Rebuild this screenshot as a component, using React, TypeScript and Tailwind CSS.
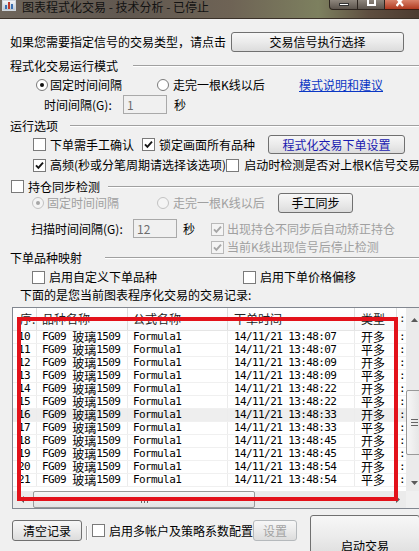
import React from 'react';

const ui = "font-['Noto_Sans_CJK_SC','Noto_Sans',sans-serif]";
const mono = "font-['DejaVu_Sans_Mono','Noto_Sans_CJK_SC',monospace] text-[11px] tracking-[-0.6px]";

type Flag = { checked?: boolean; disabled?: boolean };

function Check({ checked = false, disabled = false }: Flag) {
  return (
    <span
      className={`flex h-[13px] w-[13px] shrink-0 items-center justify-center border ${
        disabled ? 'border-[#b9b9b9] bg-[#f4f4f4]' : 'border-[#7a7a7a] bg-white'
      }`}
    >
      {checked && (
        <svg width="9" height="9" viewBox="0 0 9 9">
          <path d="M1 4.3 L3.4 6.8 L8 1.6" fill="none" stroke={disabled ? '#a6a6a6' : '#161616'} strokeWidth="1.9" />
        </svg>
      )}
    </span>
  );
}

function Radio({ checked = false, disabled = false }: Flag) {
  return (
    <span
      className={`flex h-[12px] w-[12px] shrink-0 items-center justify-center rounded-full border ${
        disabled ? 'border-[#c2c2c2] bg-[#f4f4f4]' : 'border-[#7a7a7a] bg-white'
      }`}
    >
      {checked && <span className={`h-[4px] w-[4px] rounded-full ${disabled ? 'bg-[#a6a6a6]' : 'bg-[#111]'}`} />}
    </span>
  );
}

function Btn({ children, className = '', disabled = false }: { children: React.ReactNode; className?: string; disabled?: boolean }) {
  return (
    <div
      className={`flex shrink-0 items-center justify-center rounded-[3px] border bg-[linear-gradient(#f7f7f7,#ebebeb_50%,#dcdcdc)] ${
        disabled ? 'border-[#b5b9bc] text-[#a3a3a3]' : 'border-[#707070]'
      } ${className}`}
    >
      {children}
    </div>
  );
}

function Line({ className = '' }: { className?: string }) {
  return <div className={`h-[2px] flex-1 border-t border-b border-t-[#a0a0a0] border-b-white ${className}`} />;
}

const rows = [
  ['10', '07', '开多'],
  ['11', '07', '平多'],
  ['12', '09', '开多'],
  ['13', '09', '平多'],
  ['14', '22', '开多'],
  ['15', '22', '平多'],
  ['16', '33', '开多'],
  ['17', '33', '平多'],
  ['18', '45', '开多'],
  ['19', '45', '平多'],
  ['20', '54', '开多'],
  ['21', '54', '平多'],
];

function Arrow({ dir }: { dir: 'up' | 'down' | 'left' | 'right' }) {
  const d = {
    up: 'M0 4 L3.5 0 L7 4 Z',
    down: 'M0 0 L3.5 4 L7 0 Z',
    left: 'M4 0 L0 3.5 L4 7 Z',
    right: 'M0 0 L4 3.5 L0 7 Z',
  }[dir];
  const w = dir === 'up' || dir === 'down' ? 7 : 4;
  const h = dir === 'up' || dir === 'down' ? 4 : 7;
  return (
    <svg width={w} height={h} viewBox={`0 0 ${w} ${h}`}>
      <path d={d} fill="#5a5a5a" />
    </svg>
  );
}

function RecordList() {
  return (
    <div className="ml-[12px] mt-[5px] flex h-[202px] w-[412px] shrink-0 border border-[#828790] bg-white">
      <div className="flex h-full w-[393px] flex-col">
        <div className="flex h-[23px] shrink-0 border-b border-[#e5e5e5] bg-[linear-gradient(#ffffff,#f7f8fa)] text-[#222]">
          <div className="flex w-[24px] items-center border-r border-[#dcdcdc] pl-[7px]">序.</div>
          <div className="flex w-[91px] items-center border-r border-[#dcdcdc] pl-[5px]">品种名称</div>
          <div className="flex w-[100px] items-center border-r border-[#dcdcdc] pl-[5px]">公式名称</div>
          <div className="flex w-[127px] items-center border-r border-[#dcdcdc] pl-[6px]">下单时间</div>
          <div className="flex w-[42px] items-center border-r border-[#dcdcdc] pl-[6px]">类型</div>
          <div className={`flex w-[9px] items-center pl-[2px] ${mono}`}>:</div>
        </div>
        <div className="flex-1 overflow-hidden">
          {rows.map(([n, s, t]) => (
            <div
              key={n}
              className={`flex h-[13px] border-b border-[#f0f0f0] leading-[12px] ${n === '16' ? 'bg-[#eeeeee]' : ''}`}
            >
              <div className={`flex w-[24px] items-center border-r border-[#ececec] pl-[5px] ${mono}`}>{n}</div>
              <div className="flex w-[91px] items-center whitespace-pre border-r border-[#ececec] pl-[5px]">
                <span className={mono}>FG09 </span>
                <span className="text-[12px] leading-[12px]">玻璃</span>
                <span className={mono}>1509</span>
              </div>
              <div className={`flex w-[100px] items-center border-r border-[#ececec] pl-[5px] ${mono}`}>Formula1</div>
              <div className={`flex w-[127px] items-center whitespace-pre border-r border-[#ececec] pl-[6px] ${mono}`}>
                14/11/21 13:48:{s}
              </div>
              <div className="flex w-[42px] items-center border-r border-[#ececec] pl-[6px]">{t}</div>
              <div className={`flex w-[9px] items-center pl-[2px] ${mono}`}>:</div>
            </div>
          ))}
        </div>
        <div className="flex h-[17px] shrink-0 bg-[#ebebeb]">
          <div className="flex w-[17px] items-center justify-center">
            <Arrow dir="left" />
          </div>
          <div className="ml-[3px] flex w-[222px] items-center justify-center rounded-[2px] border border-[#999] bg-[linear-gradient(#f7f7f7,#e2e2e2)]">
            <div className="flex gap-[2px]">
              <span className="h-[6px] w-[1px] bg-[#666]" />
              <span className="h-[6px] w-[1px] bg-[#666]" />
              <span className="h-[6px] w-[1px] bg-[#666]" />
            </div>
          </div>
          <div className="flex-1" />
          <div className="flex w-[17px] items-center justify-center">
            <Arrow dir="right" />
          </div>
        </div>
      </div>
      <div className="flex h-full w-[17px] flex-col bg-[#ebebeb]">
        <div className="flex h-[17px] items-end justify-center pb-[3px]">
          <Arrow dir="up" />
        </div>
        <div className="h-[65px]" />
        <div className="flex h-[65px] items-center justify-center rounded-[2px] border border-[#999] bg-[linear-gradient(90deg,#f7f7f7,#e2e2e2)]">
          <div className="flex flex-col gap-[2px]">
            <span className="h-[1px] w-[7px] bg-[#666]" />
            <span className="h-[1px] w-[7px] bg-[#666]" />
            <span className="h-[1px] w-[7px] bg-[#666]" />
          </div>
        </div>
        <div className="flex-1" />
        <div className="flex h-[17px] items-center justify-center">
          <Arrow dir="down" />
        </div>
        <div className="h-[17px] bg-[#f0f0f0]" />
      </div>
    </div>
  );
}

export default function App() {
  return (
    <div className={`relative h-[551px] w-[419px] overflow-hidden bg-[#f0f0f0] text-[12px] leading-[14px] text-black ${ui}`}>
      {/* title bar */}
      <div className="flex h-[19px] items-start border-b border-[#3a3129] bg-[linear-gradient(90deg,#6e655b_0%,#615850_30%,#6e6355_55%,#7d805f_76%,#5e4e40_88%,#4c3b30_100%)]">
        <div className="ml-[2px] flex h-[11px] w-[14px] items-end gap-[1px] border border-[#cfd6dd] bg-[linear-gradient(#f2f5f8,#b9c4cf)] px-[2px] pb-[1px]">
          <span className="h-[4px] w-[2px] bg-[#3a6fb0]" />
          <span className="h-[7px] w-[2px] bg-[#c0392b]" />
          <span className="h-[5px] w-[2px] bg-[#3a6fb0]" />
        </div>
        <div className="ml-[6px] whitespace-nowrap text-[12px] leading-[14px] text-[#121212]">图表程式化交易 - 技术分析 - 已停止</div>
        <div className="ml-auto flex h-[10px] shrink-0">
          <div className="flex w-[29px] items-center justify-center rounded-bl-[4px] border border-t-0 border-[#2d251f] bg-[linear-gradient(#8d857c,#5c544c)]">
            <span className="h-[3px] w-[10px] border border-[#333] bg-white" />
          </div>
          <div className="flex w-[27px] items-start justify-center border-b border-r border-[#2d251f] bg-[linear-gradient(#8d857c,#5c544c)]">
            <span className="h-[6px] w-[9px] border-[2px] border-t-0 border-white" />
          </div>
          <div className="flex w-[34px] items-start justify-start border-b border-[#3a1a10] bg-[linear-gradient(#d9826a,#b03a20)] pl-[11px]">
            <svg width="10" height="7" viewBox="0 0 10 7">
              <path d="M0.5 -2 L7 6 M7 -2 L0.5 6" stroke="#fff" strokeWidth="2.2" />
            </svg>
          </div>
        </div>
      </div>

      {/* row 1 */}
      <div className="mt-[13px] flex h-[20px] items-center">
        <span className="w-[231px] whitespace-nowrap pl-[10px]">如果您需要指定信号的交易类型，请点击</span>
        <Btn className="h-[20px] w-[173px]">交易信号执行选择</Btn>
      </div>

      {/* 程式化交易运行模式 */}
      <div className="mt-[7px] flex h-[14px] items-center">
        <span className="pl-[10px]">程式化交易运行模式</span>
        <Line className="ml-[15px]" />
      </div>
      <div className="mt-[5px] flex h-[14px] items-center pl-[36px]">
        <div className="flex w-[121px] items-center gap-[2px]">
          <Radio checked />
          <span>固定时间间隔</span>
        </div>
        <div className="flex w-[142px] items-center gap-[4px]">
          <Radio />
          <span>走完一根K线以后</span>
        </div>
        <span className="text-[#0b37c4] underline">模式说明和建议</span>
      </div>
      <div className="mt-[3px] flex h-[19px] items-center pl-[44px]">
        <span className="w-[79px]">时间间隔(G):</span>
        <div className="flex h-[19px] w-[44px] items-center border border-[#a9a9a9] bg-[#f0f0f0] pl-[3px] text-[#6d6d6d]">1</div>
        <span className="ml-[7px]">秒</span>
      </div>

      {/* 运行选项 */}
      <div className="mt-[5px] flex h-[14px] items-center">
        <span className="pl-[10px]">运行选项</span>
        <Line className="ml-[12px]" />
      </div>
      <div className="mt-[2px] flex h-[19px] items-center pl-[33px]">
        <div className="flex w-[109px] items-center gap-[4px]">
          <Check />
          <span>下单需手工确认</span>
        </div>
        <div className="flex w-[126px] items-center gap-[4px]">
          <Check checked />
          <span>锁定画面所有品种</span>
        </div>
        <Btn className="h-[19px] w-[137px] text-[#1a1ab0]">程式化交易下单设置</Btn>
      </div>
      <div className="mt-[4px] flex h-[14px] items-center whitespace-nowrap pl-[33px]">
        <div className="flex w-[201px] items-center gap-[4px]">
          <Check checked />
          <span>高频(秒或分笔周期请选择该选项)</span>
        </div>
        <div className="flex items-center gap-[5px]">
          <Check />
          <span>启动时检测是否对上根K信号交易</span>
        </div>
      </div>

      {/* 持仓同步检测 */}
      <div className="mt-[8px] flex h-[13px] items-center pl-[11px]">
        <Check />
        <span className="ml-[4px]">持仓同步检测</span>
        <Line className="ml-[8px]" />
      </div>
      <div className="flex h-[20px] items-center pl-[32px] text-[#a0a0a0]">
        <div className="flex w-[125px] items-center gap-[3px]">
          <Radio checked disabled />
          <span>固定时间间隔</span>
        </div>
        <div className="flex w-[121px] items-center gap-[4px]">
          <Radio disabled />
          <span>走完一根K线以后</span>
        </div>
        <Btn className="h-[20px] w-[75px] text-black">手工同步</Btn>
      </div>
      <div className="mt-[6px] flex h-[32px] items-start">
        <div className="flex h-[19px] w-[211px] items-center pl-[31px]">
          <span className="w-[102px]">扫描时间间隔(G):</span>
          <div className="flex h-[19px] w-[44px] items-center border border-[#a9a9a9] bg-[#f0f0f0] pl-[3px] text-[#6d6d6d]">12</div>
          <span className="ml-[6px]">秒</span>
        </div>
        <div className="flex flex-col whitespace-nowrap pt-[3px] text-[#a0a0a0]">
          <div className="flex h-[14px] items-center gap-[3px]">
            <Check checked disabled />
            <span>出现持仓不同步后自动矫正持仓</span>
          </div>
          <div className="mt-[4px] flex h-[14px] items-center gap-[3px]">
            <Check checked disabled />
            <span>当前K线出现信号后停止检测</span>
          </div>
        </div>
      </div>

      {/* 下单品种映射 */}
      <div className="flex h-[14px] items-center">
        <span className="pl-[10px]">下单品种映射</span>
        <Line className="ml-[23px]" />
      </div>
      <div className="mt-[5px] flex h-[14px] items-center pl-[32px]">
        <div className="flex w-[211px] items-center gap-[4px]">
          <Check />
          <span>启用自定义下单品种</span>
        </div>
        <div className="flex items-center gap-[4px]">
          <Check />
          <span>启用下单价格偏移</span>
        </div>
      </div>
      <div className="mt-[4px] flex h-[14px] items-center whitespace-nowrap pl-[20px]">下面的是您当前图表程序化交易的交易记录:</div>

      <RecordList />

      {/* bottom bar */}
      <div className="mt-[6px] flex h-[36px] items-start">
        <Btn className="ml-[12px] mt-[5px] h-[21px] w-[70px]">清空记录</Btn>
        <div className="ml-[4px] mt-[11px] h-[14px] w-[2px] border-l border-r border-l-[#a0a0a0] border-r-white" />
        <div className="ml-[4px] mt-[5px] flex h-[21px] w-[168px] items-center gap-[4px] whitespace-nowrap">
          <Check />
          <span>启用多帐户及策略系数配置</span>
        </div>
        <Btn disabled className="mt-[5px] h-[21px] w-[44px]">设置</Btn>
        <div className="ml-[13px] h-[44px] w-[110px] shrink-0 rounded-[3px] border border-[#707070] bg-[linear-gradient(#f7f7f7,#ebebeb_50%,#dcdcdc)] pt-[23px] text-center">
          启动交易
        </div>
      </div>

      {/* red annotation box */}
      <div className="pointer-events-none absolute left-[17px] top-[317px] h-[184px] w-[381px] border-4 border-[#e3121b]" />
    </div>
  );
}
